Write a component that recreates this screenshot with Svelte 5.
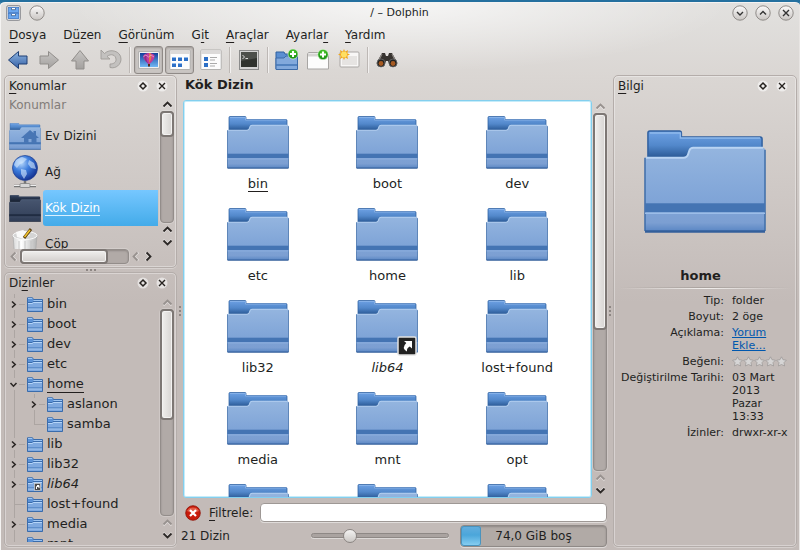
<script>
  const menus = [
    ['', 'D', 'osya'],
    ['D', 'ü', 'zen'],
    ['', 'G', 'örünüm'],
    ['G', 'i', 't'],
    ['', 'A', 'raçlar'],
    ['Ayarla', 'r', ''],
    ['', 'Y', 'ardım']
  ];

  const entries = [
    'bin', 'boot', 'dev',
    'etc', 'home', 'lib',
    'lib32', 'lib64', 'lost+found',
    'media', 'mnt', 'opt',
    '', '', ''
  ];

  const tree = [
    { name: 'bin', arrow: 'right' },
    { name: 'boot', arrow: 'right' },
    { name: 'dev', arrow: 'right' },
    { name: 'etc', arrow: 'right' },
    {
      name: 'home',
      arrow: 'down',
      children: [{ name: 'aslanon', arrow: 'right' }, { name: 'samba' }]
    },
    { name: 'lib', arrow: 'right' },
    { name: 'lib32', arrow: 'right' },
    { name: 'lib64', arrow: 'right', link: true },
    { name: 'lost+found' },
    { name: 'media', arrow: 'right' },
    { name: 'mnt' }
  ];

  let filter = $state('');
  let zoom = $state(25);
</script>

{#snippet folder(dark)}
  <svg class="folder" viewBox="0 0 124 104" preserveAspectRatio="none" aria-hidden="true">
    <path d="M4 30V3q0-2 2-2H36q2 0 2 2V7H118q2 0 2 2V30Z" fill="url(#{dark ? 'darkBack' : 'folderBack'})" stroke={dark ? '#1c2638' : '#2f5f9f'} stroke-width="1.500" />
    <path d="M6 3H37V8H118" fill="none" stroke={dark ? '#4b5c7a' : '#8fb9ec'} stroke-width="1.500" />
    <path d="M1 28H40q4 0 5-4l1-3q1-3 4-3H121q2 0 2 2V102H1Z" fill="url(#{dark ? 'darkFront' : 'folderFront'})" />
    <path d="M1 28V102M123 20V102" stroke={dark ? '#1a2436' : '#3d6ca8'} stroke-width="1.500" />
    <path d="M2 28H40q4 0 5-4l1-3q1-3 4-3H121" fill="none" stroke={dark ? '#61708c' : '#b9d4f3'} stroke-width="2" />
    <rect x="1" y="74" width="122" height="9" fill={dark ? '#202c42' : '#4474b3'} />
    <path d="M1 84H123" stroke={dark ? '#55657f' : '#9cbde8'} stroke-width="1.500" />
    <path d="M1 102.500H123" stroke={dark ? '#182133' : '#335f9b'} stroke-width="2.500" />
  </svg>
{/snippet}

{#snippet smallFolder(link)}
  <svg class="small-folder" viewBox="0 0 16 15" width="16" height="15" aria-hidden="true">
    <path d="M.5 14V.8H5.500L6.500 2.500H15.500V14Z" fill="#5c92d6" stroke="#3a6cac" />
    <path d="M1 1.500H5.300M6.500 3.500H15" stroke="#9cc4f2" />
    <path d="M.5 5.500H5L6 4.500H15.500V14.500H.5Z" fill="#7fa9df" stroke="#3a6cac" />
    <path d="M1 6.500H5.500L6.500 5.500H15" fill="none" stroke="#b5d5f8" />
    <path d="M1 11H15" stroke="#3f73b6" />
    <path d="M1 12H15" stroke="#a4c6ef" />
    {#if link}
      <rect x="7.500" y="6.500" width="6" height="7" fill="#4a4a4a" stroke="#d5d5d5" stroke-width=".7" />
      <path d="M9.500 12V9.500H12M10 8.500h2v2.500" stroke="#fff" fill="none" />
    {/if}
  </svg>
{/snippet}

{#snippet chevron(dir, faint)}
  <svg class="chevron {dir}" class:faint viewBox="0 0 13 13" width="13" height="13" aria-hidden="true">
    <path class="halo" d="M2.500 9.500L6.500 5.500L10.500 9.500" />
    <path d="M2.500 8.500L6.500 4.500L10.500 8.500" />
  </svg>
{/snippet}

{#snippet scrollbar(kind, faintUp)}
  <div class="scrollbar {kind}">
    <button aria-label="Önceki">{@render chevron(kind === 'across' ? 'left' : 'up', faintUp)}</button>
    <div class="track"><div class="thumb"></div></div>
    <button aria-label="Geri">{@render chevron(kind === 'across' ? 'left' : 'up', faintUp)}</button>
    <button aria-label="Sonraki">{@render chevron(kind === 'across' ? 'right' : 'down', false)}</button>
  </div>
{/snippet}

{#snippet dockHead(before, key, after)}
  <header class="dock-head">
    <h2>{before}<u>{key}</u>{after}</h2>
    <button aria-label="Ayır">
      <svg viewBox="0 0 12 12" width="12" height="12"><circle cx="6" cy="6" r="5.500" fill="#fff" opacity=".55" /><path d="M6 3L9 6L6 9L3 6Z" fill="none" stroke="#26221f" stroke-width="1.500" /></svg>
    </button>
    <button aria-label="Kapat">
      <svg viewBox="0 0 12 12" width="12" height="12"><circle cx="6" cy="6" r="5.500" fill="#fff" opacity=".55" /><path d="M3 3L9 9M9 3L3 9" stroke="#26221f" stroke-width="1.400" /></svg>
    </button>
  </header>
{/snippet}

{#snippet branch(nodes)}
  <ul>
    {#each nodes as node}
      <li>
        <div class="node">
          <span class="twig" class:leaf={!node.arrow}>
            {#if node.arrow}
              <svg class="twist {node.arrow}" viewBox="0 0 9 9" width="9" height="9" aria-hidden="true"><path d="M3 1.500L6.200 4.500L3 7.500" /></svg>
            {/if}
          </span>
          {@render smallFolder(node.link)}
          <span class="name" class:current={node.name === 'home'} class:link={node.link}>{node.name}</span>
        </div>
        {#if node.children}{@render branch(node.children)}{/if}
      </li>
    {/each}
  </ul>
{/snippet}

<svg class="defs" width="0" height="0" aria-hidden="true">
  <defs>
    <linearGradient id="folderBack" x1="0" y1="0" x2="0" y2="1">
      <stop offset="0" stop-color="#6ea1e4" /><stop offset=".5" stop-color="#5288cb" /><stop offset="1" stop-color="#23508b" />
    </linearGradient>
    <linearGradient id="folderFront" x1="0" y1="0" x2="0" y2="1">
      <stop offset="0" stop-color="#94b5df" /><stop offset=".65" stop-color="#7fa4d7" /><stop offset=".9" stop-color="#7c9fd2" /><stop offset="1" stop-color="#5b87c4" />
    </linearGradient>
    <linearGradient id="darkBack" x1="0" y1="0" x2="0" y2="1">
      <stop offset="0" stop-color="#34435f" /><stop offset="1" stop-color="#131b2a" />
    </linearGradient>
    <linearGradient id="darkFront" x1="0" y1="0" x2="0" y2="1">
      <stop offset="0" stop-color="#47556f" /><stop offset="1" stop-color="#303d56" />
    </linearGradient>
    <linearGradient id="metal" x1="0" y1="0" x2="0" y2="1">
      <stop offset="0" stop-color="#fbfafa" /><stop offset="1" stop-color="#c9c5c2" />
    </linearGradient>
    <linearGradient id="blueArrow" x1="0" y1="0" x2="0" y2="1">
      <stop offset="0" stop-color="#8fb6e2" /><stop offset="1" stop-color="#345fa4" />
    </linearGradient>
    <linearGradient id="grayArrow" x1="0" y1="0" x2="0" y2="1">
      <stop offset="0" stop-color="#c8c6c4" /><stop offset="1" stop-color="#a3a09e" />
    </linearGradient>
    <radialGradient id="globe" cx=".35" cy=".3" r=".75">
      <stop offset="0" stop-color="#b7d8fb" /><stop offset=".45" stop-color="#3d7ddd" /><stop offset="1" stop-color="#122f8f" />
    </radialGradient>
    <radialGradient id="green" cx=".5" cy=".3" r=".8">
      <stop offset="0" stop-color="#52cf30" /><stop offset="1" stop-color="#087d08" />
    </radialGradient>
    <linearGradient id="sky" x1="0" y1="0" x2="0" y2="1">
      <stop offset="0" stop-color="#123d9b" /><stop offset="1" stop-color="#71b8f5" />
    </linearGradient>
    <linearGradient id="can" x1="0" y1="0" x2="1" y2="0">
      <stop offset="0" stop-color="#d8d8d8" /><stop offset=".35" stop-color="#fff" /><stop offset="1" stop-color="#b5b5b5" />
    </linearGradient>
  </defs>
</svg>

<div class="window">
  <div class="titlebar">
    <svg class="app-icon" viewBox="0 0 15 16" width="15" height="16" aria-hidden="true">
      <rect x=".7" y=".7" width="13.600" height="14.600" rx="1.500" fill="#e9e9ea" stroke="#85878c" />
      <rect x="2.300" y="2.500" width="10.400" height="5" fill="#6aa7f0" stroke="#3f78c5" stroke-width=".8" />
      <rect x="2.300" y="8.500" width="10.400" height="5" fill="#6aa7f0" stroke="#3f78c5" stroke-width=".8" />
      <path d="M5.500 3v1.700h4V3M5.500 9v1.700h4V9" fill="#fff" stroke="#3a5c88" stroke-width=".8" />
    </svg>
    <button class="round" aria-label="Tüm masaüstlerinde">
      <svg viewBox="0 0 16 16" width="16" height="16"><circle cx="8" cy="8" r="7.200" fill="url(#metal)" stroke="#8f8b88" /><circle cx="8" cy="8" r=".8" fill="#333" /></svg>
    </button>
    <h1>/ – Dolphin</h1>
    <div class="window-buttons">
      {#each [['Küçült', 'M5 7L8 10L11 7'], ['Büyüt', 'M5 9.500L8 6.500L11 9.500'], ['Kapat', 'M5 5L11 11M11 5L5 11']] as [label, d]}
        <button class="round" aria-label={label}>
          <svg viewBox="0 0 16 16" width="16" height="16"><circle cx="8" cy="8" r="7.200" fill="url(#metal)" stroke="#8f8b88" /><path {d} fill="none" stroke="#333" stroke-width="1.400" /></svg>
        </button>
      {/each}
    </div>
  </div>

  <nav class="menubar">
    {#each menus as [before, key, after]}
      <button>{before}<u>{key}</u>{after}</button>
    {/each}
  </nav>

  <div class="toolbar">
    <button aria-label="Geri">
      <svg viewBox="0 0 22 22" width="22" height="22"><path d="M1.500 11L11.500 2.500V7H20V15H11.500V19.500Z" fill="url(#blueArrow)" stroke="#1f3f75" stroke-linejoin="round" /></svg>
    </button>
    <button aria-label="İleri">
      <svg viewBox="0 0 22 22" width="22" height="22"><path d="M20.500 11L10.500 2.500V7H2V15H10.500V19.500Z" fill="url(#grayArrow)" stroke="#918e8b" stroke-linejoin="round" /></svg>
    </button>
    <button aria-label="Yukarı">
      <svg viewBox="0 0 22 22" width="22" height="22"><path d="M11 1.500L19.500 12H15V20H7V12H2.500Z" fill="url(#grayArrow)" stroke="#918e8b" stroke-linejoin="round" /></svg>
    </button>
    <button aria-label="Geri al">
      <svg viewBox="0 0 22 22" width="22" height="22"><path d="M1 1V10H10L7 7.500C11 4 16 6 16 10.500C16 13.500 13.500 15 10 15L10 18.500C16 20 21 15.500 21 10C21 2 10 -1 4.500 4.500Z" fill="#c3c1bf" stroke="#9f9c99" stroke-width=".9" stroke-linejoin="round" /></svg>
    </button>
    <span class="divider"></span>
    <button class="pressed" aria-label="Önizleme" aria-pressed="true">
      <svg viewBox="0 0 22 22" width="22" height="22">
        <rect x=".8" y="2.800" width="20.400" height="16.400" fill="#fff" stroke="#999" stroke-width=".7" />
        <rect x="2" y="4" width="18" height="14" fill="url(#sky)" />
        <path d="M11 15.500C7 12 4.500 9 5.500 6.500C7 3 15 3 16.500 6.500C17 9 15 12 11 15.500Z" fill="#c43a9b" />
        <path d="M9 4.500C7.500 8 8.500 12 10.500 15L7.500 12C5.500 9 6 6 9 4.500Z" fill="#8a2f8a" />
        <path d="M11 4V14C13.500 11 14 7 13 4.500Z" fill="#e07a4a" />
        <path d="M5.500 7.500L8 6L10.500 8L13 6L16 8" fill="none" stroke="#e7a3d2" stroke-width=".8" />
        <rect x="10" y="15" width="2" height="2.500" fill="#5b2c1c" />
      </svg>
    </button>
    <button class="pressed" aria-label="Simgeler" aria-pressed="true">
      <svg viewBox="0 0 22 22" width="22" height="22">
        <rect x=".8" y="1" width="20.400" height="19.500" rx="1" fill="#fcfcfc" stroke="#a5a3a1" stroke-width=".8" />
        <rect x="1.200" y="1.400" width="19.600" height="3.600" fill="#dcdad9" />
        {#each [8, 14] as y}{#each [3, 9, 15] as x}{#if y === 8 || x < 15}<rect {x} {y} width="4" height="4" fill="#2c6fc6" /><path d="M{x} {y + 0.5}h4" stroke="#8db9ee" />{/if}{/each}{/each}
      </svg>
    </button>
    <button aria-label="Ayrıntılar">
      <svg viewBox="0 0 22 22" width="22" height="22">
        <rect x=".8" y="1" width="20.400" height="19.500" rx="1" fill="#fcfcfc" stroke="#a5a3a1" stroke-width=".8" />
        <rect x="1.200" y="1.400" width="19.600" height="3.600" fill="#dcdad9" />
        {#each [8, 14] as y}<rect x="4" {y} width="4" height="4" fill="#2c6fc6" /><path d="M10 {y + 0.5}h7M10 {y + 3}h5" stroke="#aaa" />{/each}
      </svg>
    </button>
    <span class="divider"></span>
    <button aria-label="Uçbirim">
      <svg viewBox="0 0 22 22" width="22" height="22">
        <rect x="1.500" y="1.500" width="19" height="19" fill="#d4d4d4" stroke="#8c8c8c" /><rect x="3" y="3" width="16" height="15" fill="#30332f" />
        <path d="M3 3H19V9L3 12Z" fill="#4c4f4b" /><path d="M4.500 6L6.500 8L4.500 10M7.500 9.500H10" fill="none" stroke="#fff" stroke-width=".8" />
      </svg>
    </button>
    <span class="divider"></span>
    <button aria-label="Yeni klasör">
      <svg viewBox="0 0 24 22" width="24" height="22">
        <path d="M1 20V3H9L10 5H22V20Z" fill="#5b8fd2" stroke="#2e609f" /><path d="M1 9H9L11 7H22.500V20.500H1Z" fill="#82a9dc" stroke="#3c6ba8" />
        <path d="M1 16H22" stroke="#4276b6" stroke-width="1.500" />
        <circle cx="18" cy="5" r="5" fill="url(#green)" stroke="#e9ffe0" stroke-width=".6" /><path d="M18 2V8M15 5H21" stroke="#fff" stroke-width="2" />
      </svg>
    </button>
    <button aria-label="Yeni sekme">
      <svg viewBox="0 0 24 22" width="24" height="22">
        <path d="M2.500 3.500H14V6.500H22.500V20H1.500V5Z" fill="#fcfcfc" stroke="#a8a6a4" /><path d="M2 6H20" stroke="#d6d4d3" stroke-width="3" />
        <circle cx="17" cy="5.500" r="5.200" fill="url(#green)" stroke="#e9ffe0" stroke-width=".6" /><path d="M17 2.500V8.500M14 5.500H20" stroke="#fff" stroke-width="2" />
      </svg>
    </button>
    <button aria-label="Yeni pencere">
      <svg viewBox="0 0 24 22" width="24" height="22">
        <rect x="3" y="3" width="19" height="15" rx="1" fill="#f8f7f6" stroke="#aaa7a5" /><rect x="5" y="7" width="15" height="9" fill="#e6e4e2" />
        <path d="M7 0L8.200 2.800L11 1L10.300 4.300L13 5.500L10.300 6.700L11 10L8.200 8.500L7 11L5.800 8.500L3 10L3.700 6.700L1 5.500L3.700 4.300L3 1L5.800 2.800Z" fill="#f3a81c" /><circle cx="7" cy="5.500" r="3" fill="#ffdf62" />
      </svg>
    </button>
    <span class="divider"></span>
    <button aria-label="Bul">
      <svg viewBox="0 0 24 22" width="24" height="22">
        <path d="M7 4H10L11 7H13L14 4H17L22 13C24 18 15 20 14 15L13 12H11L10 15C9 20 0 18 2 13Z" fill="#37332f" />
        <path d="M7 5L4 11M17 5L20 11" stroke="#8a8682" stroke-width="1.200" />
        <circle cx="6" cy="14" r="4" fill="#222" stroke="#777" stroke-width=".7" /><circle cx="18" cy="14" r="4" fill="#222" stroke="#777" stroke-width=".7" />
        <circle cx="6" cy="14.500" r="2.400" fill="#a65a22" /><circle cx="18" cy="14.500" r="2.400" fill="#a65a22" />
      </svg>
    </button>
  </div>

  <div class="workspace">
    <aside class="side">
      <section class="dock places">
        {@render dockHead('', 'K', 'onumlar')}
        <div class="dock-body">
          <div class="place-list">
            <h3>Konumlar</h3>
            <a class="place" href="#home">
              <span class="place-icon">{@render folder(false)}
                <svg class="emblem-home" viewBox="0 0 18 14" width="18" height="14" aria-hidden="true"><path d="M9 0L12.500 3V1H15V5.300L18 8H15.500V13H10.500V9H7.500V13H3V8H0Z" fill="#4876b5" /></svg>
              </span><span class="place-label">Ev Dizini</span>
            </a>
            <a class="place" href="#network">
              <span class="place-icon">
                <svg viewBox="0 0 32 34" width="32" height="34" aria-hidden="true">
                  <circle cx="16" cy="13" r="12.500" fill="url(#globe)" stroke="#1d3c8c" stroke-width=".7" />
                  <path d="M7 5L13 2L18 4L14 8L11 9L8 13L5 10ZM20 5L25 8L27 14L22 13L19 9ZM12 14L17 15L18 19L15 24L12 19Z" fill="#d5eafd" opacity=".6" />
                  <path d="M16 26V30M5 31H27" stroke="#777" stroke-width="2.500" /><path d="M5 30.500H27" stroke="#eee" /><rect x="11" y="28.500" width="10" height="4" rx="1" fill="#d6d6d6" stroke="#777" stroke-width=".7" />
                </svg>
              </span><span class="place-label">Ağ</span>
            </a>
            <a class="place selected" href="#root">
              <span class="place-icon">{@render folder(true)}</span><span class="place-label"><span>Kök Dizin</span></span>
            </a>
            <a class="place" href="#trash">
              <span class="place-icon">
                <svg viewBox="0 0 32 34" width="32" height="34" aria-hidden="true">
                  <path d="M4 8L6 33H26L28 8Z" fill="url(#can)" stroke="#aaa" stroke-width=".7" /><ellipse cx="16" cy="8.500" rx="12" ry="4" fill="#d4d4d4" stroke="#f8f8f8" />
                  <path d="M7 5L14 3L21 8L15 12L8 10Z" fill="#fafafa" /><path d="M15 11L22 2" stroke="#5c4316" stroke-width="3" /><path d="M15.500 10L21 3" stroke="#f2c32d" stroke-width="1.600" />
                  <path d="M10 14V32M16 14V32M22 14V32" stroke="#c4c4c4" />
                </svg>
              </span><span class="place-label">Çöp</span>
            </a>
          </div>
          {@render scrollbar('short', false)}
        </div>
        {@render scrollbar('across', true)}
      </section>
      <div class="grip horizontal"></div>
      <section class="dock folders">
        {@render dockHead('Di', 'z', 'inler')}
        <div class="dock-body">
          <div class="tree">{@render branch(tree)}</div>
          {@render scrollbar('half', true)}
        </div>
      </section>
    </aside>

    <div class="grip vertical"></div>

    <main>
      <h2 class="location">Kök Dizin</h2>
      <div class="view-row">
        <div class="view">
          {#each entries as name}
            <a class="entry" href="#{name}">
              <span class="thumbnail">
                {@render folder(false)}
                {#if name === 'lib64'}
                  <svg class="link-badge" viewBox="0 0 20 20" width="20" height="20" aria-hidden="true">
                    <rect x="1" y="1" width="18" height="18" rx="1.500" fill="#222" stroke="#e2e2e2" stroke-width="1.500" />
                    <path d="M7 5H15V12.500L12.700 10.500Q9.500 12 10 15.500Q4 12 9.300 7Z" fill="#fff" />
                  </svg>
                {/if}
              </span>
              {#if name}
                <span class="label" class:current={name === 'bin'} class:link={name === 'lib64'}>{name}</span>
              {/if}
            </a>
          {/each}
        </div>
        {@render scrollbar('long', true)}
      </div>
      <div class="filter-row">
        <button aria-label="Süzgeç çubuğunu gizle">
          <svg viewBox="0 0 16 16" width="16" height="16"><circle cx="8" cy="8" r="7.300" fill="#c81b0b" stroke="#8e1206" stroke-width=".8" /><path d="M2 6a6.300 5 0 0 1 12 0q-6 3-12 0" fill="#ee7761" opacity=".7" /><path d="M5 5L11 11M11 5L5 11" stroke="#fff" stroke-width="2.200" /></svg>
        </button>
        <label for="filter"><u>F</u>iltrele:</label>
        <input id="filter" type="text" bind:value={filter} />
      </div>
      <div class="status-row">
        <span class="count">21 Dizin</span>
        <input class="zoom" type="range" aria-label="Simge boyutu" min="0" max="100" bind:value={zoom} />
        <div class="capacity"><span class="used"></span><span class="free">74,0 GiB boş</span></div>
      </div>
    </main>

    <div class="grip vertical"></div>

    <aside class="dock info">
      {@render dockHead('', 'B', 'ilgi')}
      <div class="preview">{@render folder(false)}</div>
      <h3>home</h3>
      <hr />
      <dl>
        <dt>Tip:</dt><dd>folder</dd>
        <dt>Boyut:</dt><dd>2 öge</dd>
        <dt>Açıklama:</dt><dd><a href="#comment">Yorum Ekle...</a></dd>
        <dt>Beğeni:</dt>
        <dd class="stars">
          {#each [1, 2, 3, 4, 5] as n}
            <button aria-label="{n} yıldız"><svg viewBox="0 0 11 11" width="11" height="11"><path d="M5.500 .8L7 3.700L10.400 4.200L8 6.600L8.600 10L5.500 8.500L2.400 10L3 6.600L.6 4.200L4 3.700Z" fill="#d6d5d5" stroke="#9f9c9a" stroke-width=".8" /></svg></button>
          {/each}
        </dd>
        <dt>Değiştirilme Tarihi:</dt><dd>03 Mart 2013 Pazar 13:33</dd>
        <dt>İzinler:</dt><dd class="mode">drwxr-xr-x</dd>
      </dl>
    </aside>
  </div>
</div>

<style>
  :global(body) { margin: 0; background: #24709f; }
  * { box-sizing: border-box; }
  .defs { position: absolute; }
  .window {
    height: 100vh;
    display: flex;
    flex-direction: column;
    padding: 0 3px 3px 4px;
    border-top: 2px solid #24709f;
    border-radius: 5px 5px 0 0;
    font: 13px/16px "DejaVu Sans", sans-serif;
    color: #221f1e;
    background:
      radial-gradient(ellipse 330px 70px at 50% 0, rgba(255, 255, 255, .7), rgba(255, 255, 255, 0)),
      linear-gradient(#e2e1df 0, #dad6d3 75px, #c3bbb8 300px);
    box-shadow: inset 1px 1px #f4f3f2, inset -1px 0 #e8e5e3;
    overflow: hidden;
  }
  h1, h2, h3, ul, dl, dd { margin: 0; padding: 0; font: inherit; }
  button { margin: 0; padding: 0; border: 0; background: none; color: inherit; font: inherit; display: block; }
  a { color: inherit; text-decoration: none; }
  svg { display: block; flex: none; }
  u { text-underline-offset: 3px; text-decoration-thickness: 1px; }

  .titlebar { flex: none; height: 22px; display: flex; align-items: center; gap: 8px; padding: 0 3px 0 2px; }
  .titlebar h1 { flex: 1; padding-left: 22px; text-align: center; font-size: 11px; }
  .window-buttons { display: flex; gap: 7px; }

  .menubar { flex: none; height: 22px; display: flex; align-items: center; gap: 17px; padding-left: 5px; font-size: 12px; }
  .toolbar { flex: none; height: 28px; display: flex; align-items: center; margin-left: -2px; }
  .toolbar button { width: 31px; height: 28px; display: flex; align-items: center; justify-content: center; }
  .toolbar .pressed { width: 29px; margin: 0 1px; border: 1px solid #8f8a87; border-radius: 3px; background: #c9c5c2; box-shadow: inset 0 1px 2px #9d9895; }
  .divider { width: 1px; height: 26px; margin: 0 3px; background: #bdb8b5; box-shadow: 1px 0 #f2f0ef; }

  .workspace { flex: 1; min-height: 0; display: grid; grid-template-columns: 173px 6px minmax(0, 1fr) 6px 184px; padding-top: 1px; }
  .side { min-height: 0; display: flex; flex-direction: column; }
  .dock { border: 1px solid #b4adaa; border-radius: 5px; box-shadow: inset 0 0 0 1px rgba(255, 255, 255, .35), 0 1px rgba(255, 255, 255, .3); display: flex; flex-direction: column; min-height: 0; }
  .places { flex: none; height: 193px; }
  .folders { flex: 1; }
  .dock-head { flex: none; height: 19px; display: flex; align-items: center; gap: 7px; padding: 1px 8px 0 4px; }
  .dock-head h2 { flex: 1; font-size: 12px; }
  .dock-body { flex: 1; min-height: 0; display: flex; justify-content: space-between; padding: 0 2px 0 4px; }
  .folders .dock-body { padding: 2px 2px 4px 4px; }

  .place-list { flex: 1; overflow: hidden; margin-right: 2px; font-size: 12px; }
  .place-list h3 { height: 23px; line-height: 20px; color: #827c79; }
  .place { display: flex; height: 36px; }
  .place-icon { position: relative; flex: none; width: 34px; display: flex; align-items: center; }
  .place-icon .folder { width: 32px; height: 27px; }
  .emblem-home { position: absolute; left: 12px; top: 12px; }
  .place-label { flex: 1; display: flex; align-items: center; padding-left: 2px; }
  .selected .place-label { color: #fff; border-radius: 3px 0 0 3px; background: linear-gradient(#76c7ff, #43abe9); }
  .selected .place-label span { border-bottom: 1px solid #d9f0ff; line-height: 14px; }

  .scrollbar { flex: none; width: 14px; display: flex; flex-direction: column; align-items: center; }
  .track { flex: 1; width: 14px; border: 1px solid #938d8a; border-radius: 4px; background: #b1aaa7; box-shadow: inset 0 1px 2px #8d8784, 0 0 0 1px rgba(255, 255, 255, .2); display: flex; flex-direction: column; }
  .thumb { height: 26px; margin: -1px; border: 2px solid #7d7774; border-radius: 4px; background: linear-gradient(90deg, #f0efed, #d7d4d2); box-shadow: inset 0 0 0 1px #f3f2f1; }
  .short { padding-top: 3px; }
  .half { padding-top: 2px; }
  .half .thumb { height: 54%; }
  .long .thumb { height: 61%; }
  .across { width: 148px; height: 15px; margin: 0 0 3px 2px; flex-direction: row; }
  .across .track { width: auto; height: 15px; flex-direction: row; }
  .across .thumb { width: 82%; height: auto; background: linear-gradient(#f0efed, #d2cecb); }
  .chevron path { fill: none; stroke: #2c2826; stroke-width: 1.800; }
  .chevron .halo { stroke: #fff; opacity: .5; }
  .faint path { stroke: #98928f; }
  .down { transform: rotate(180deg); }
  .left { transform: rotate(-90deg); }
  .right { transform: rotate(90deg); }

  .grip { display: flex; align-items: center; justify-content: center; }
  .grip::before { content: ""; width: 2px; height: 10px; background: repeating-linear-gradient(#8d8683 0 2px, transparent 2px 4px); }
  .horizontal { flex: none; height: 4px; }
  .horizontal::before { width: 10px; height: 2px; background: repeating-linear-gradient(90deg, #8d8683 0 2px, transparent 2px 4px); }

  .tree { flex: 1; overflow: hidden; }
  ul { list-style: none; }
  li { position: relative; }
  li ul { padding-left: 20px; }
  .node { height: 20px; display: flex; align-items: center; }
  .twig { width: 18px; height: 20px; display: flex; align-items: center; background: linear-gradient(#aca5a2, #aca5a2) 10px 10px / 6px 1px no-repeat, linear-gradient(#aca5a2, #aca5a2) 5px 0 / 1px 4px no-repeat, linear-gradient(#aca5a2, #aca5a2) 5px 16px / 1px 4px no-repeat; }
  .leaf { background: linear-gradient(#aca5a2, #aca5a2) 5px 10px / 11px 1px no-repeat, linear-gradient(#aca5a2, #aca5a2) 5px 0 / 1px 100% no-repeat; }
  li ul li:last-child .leaf { background: linear-gradient(#aca5a2, #aca5a2) 5px 10px / 11px 1px no-repeat, linear-gradient(#aca5a2, #aca5a2) 5px 0 / 1px 50% no-repeat; }
  li:not(:last-child) > ul { background: linear-gradient(#aca5a2, #aca5a2) 5px 0 / 1px 100% no-repeat; }
  .twist path { fill: none; stroke: #2c2826; stroke-width: 1.600; }
  .twist { transform: none; }
  .twist.down { transform: rotate(90deg); }
  .name { margin-left: 4px; line-height: 16px; }
  .current { border-bottom: 1px solid #221f1e; }
  .link { font-style: italic; }

  main { min-width: 0; min-height: 0; display: flex; flex-direction: column; }
  .location { flex: none; height: 25px; padding-left: 2px; line-height: 20px; font-weight: bold; }
  .view-row { flex: 1; min-height: 0; display: flex; gap: 1px; }
  .view { flex: 1; min-width: 0; overflow: hidden; display: grid; grid-template-columns: repeat(3, 1fr); grid-auto-rows: 92px; padding: 15px 9px 0; border: 1px solid #83cfee; border-radius: 3px; background: #fff; box-shadow: inset 0 0 0 1px #c5ecfa; }
  .entry { display: flex; flex-direction: column; align-items: center; }
  .thumbnail { position: relative; }
  .thumbnail .folder { width: 62px; height: 53px; }
  .link-badge { position: absolute; right: 1px; bottom: -3px; }
  .label { margin-top: 7px; line-height: 15px; }
  .long { padding-bottom: 1px; }

  .filter-row { flex: none; height: 19px; margin-top: 5px; display: flex; align-items: center; padding-left: 2px; }
  .filter-row label { margin: 0 7px 0 8px; font-size: 12px; }
  .filter-row input { flex: 1; min-width: 0; height: 19px; padding: 0 5px; border: 1px solid #9e9895; border-radius: 4px; background: #fff; font: inherit; box-shadow: 0 1px #e0dcda; outline: 0; }
  .status-row { flex: none; height: 23px; margin-top: 2px; display: flex; align-items: center; font-size: 12px; }
  .count { flex: 1; margin-left: -2px; }
  .zoom { appearance: none; width: 138px; height: 16px; margin: 0 11px 0 0; background: none; }
  .zoom::-webkit-slider-runnable-track { height: 5px; border: 1px solid #8e8885; border-radius: 3px; background: #aaa3a0; box-shadow: 0 1px #ddd9d7; }
  .zoom::-webkit-slider-thumb { appearance: none; width: 14px; height: 14px; margin-top: -5px; border: 1px solid #8b8582; border-radius: 50%; background: linear-gradient(#f4f3f2, #cbc7c4); }
  .capacity { width: 147px; height: 22px; display: flex; align-items: center; border: 1px solid #8f8986; border-radius: 4px; background: #b1aaa6; box-shadow: inset 0 1px 2px #8d8784, 0 1px #ddd9d7; }
  .used { width: 20px; height: 20px; border-radius: 3px; background: linear-gradient(#65aede, #4ba6da 45%, #8bd1f3); box-shadow: inset 0 0 0 1px #4a93bd; }
  .free { flex: 1; padding-right: 20px; text-align: center; }

  .preview { display: flex; justify-content: center; padding-top: 35px; }
  .preview .folder { width: 122px; height: 103px; }
  .info h3 { margin-top: 35px; text-align: center; font-weight: bold; padding-right: 9px; }
  .info hr { flex: none; width: 172px; height: 2px; margin: 3px auto 5px; border: 0; background: linear-gradient(90deg, transparent, #f1eeec, transparent) 0 100% / 100% 1px no-repeat, linear-gradient(90deg, transparent, #a9a29e, transparent) 0 0 / 100% 1px no-repeat; }
  dl { display: grid; grid-template-columns: 107px 58px; column-gap: 8px; row-gap: 3px; font-size: 11px; line-height: 13px; padding-left: 3px; }
  dt { text-align: right; white-space: nowrap; }
  dd a { color: #0057ae; text-decoration: underline; }
  .stars { display: flex; align-items: center; }
</style>
